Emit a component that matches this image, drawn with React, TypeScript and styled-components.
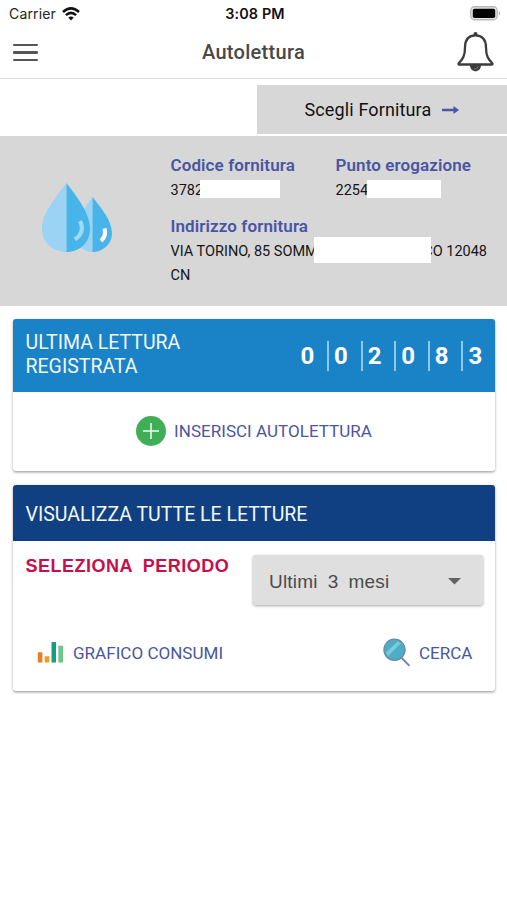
import React from "react";
import styled, { createGlobalStyle } from "styled-components";

const GlobalStyle = createGlobalStyle`
  * { box-sizing: border-box; }
  html, body { margin: 0; background: #fff; }
  body { font-family: Roboto, sans-serif; color: #151515; }
  button { font: inherit; color: inherit; border: 0; padding: 0; background: none; }
`;

const Screen = styled.main`
  width: 507px;
  height: 900px;
  overflow: hidden;
  background: #fff;
`;

const StatusBar = styled.div`
  height: 28px;
  display: grid;
  grid-template-columns: 1fr auto 1fr;
  align-items: center;
  padding: 0 6px 0 9px;
  font: 400 14px/28px Inter, sans-serif;
  color: #222;
`;

const Carrier = styled.span`
  display: flex;
  align-items: center;
  gap: 6px;
  letter-spacing: 0.15px;
`;

const Clock = styled.span`
  font-weight: 600;
  font-size: 14.4px;
  letter-spacing: 0.1px;
  color: #111;
`;

const BatterySlot = styled.span`
  display: flex;
  justify-content: flex-end;
  padding-bottom: 2px;
`;

const AppBar = styled.header`
  height: 51px;
  display: grid;
  grid-template-columns: 1fr auto 1fr;
  align-items: center;
  padding: 0 13px;
  border-bottom: 1px solid #dedede;
`;

const Title = styled.h1`
  margin: 0;
  padding-bottom: 3px;
  font-size: 20px;
  font-weight: 500;
  letter-spacing: 0.3px;
  line-height: 24px;
  color: #484848;
`;

const MenuButton = styled.button`
  display: grid;
  gap: 5px;
  width: 25px;
  padding-bottom: 1px;
`;

const MenuLine = styled.span`
  height: 2.5px;
  background: #555;
  border-radius: 1px;
`;

const BellButton = styled.button`
  justify-self: end;
  display: flex;
  padding-bottom: 3px;
`;

const SupplyRow = styled.div`
  display: flex;
  justify-content: flex-end;
  padding-top: 6px;
  margin-bottom: 2px;
`;

const SupplyButton = styled.button`
  width: 250px;
  height: 49px;
  display: flex;
  align-items: center;
  padding-left: 47.5px;
  gap: 11px;
  background: #d7d7d7;
  font-size: 18px;
  letter-spacing: 0.13px;
  color: #111;
`;

const SupplyPanel = styled.section`
  height: 170px;
  display: flex;
  background: #d7d7d7;
`;

const DropsColumn = styled.div`
  width: 170.5px;
  padding: 46px 0 0 41px;
`;

const Details = styled.div`
  width: 331px;
  padding-top: 17px;
  display: grid;
  grid-template-columns: 165px 1fr;
  grid-template-rows: 61px auto;
`;

const Field = styled.div<{ $wide?: boolean }>`
  grid-column: ${(p) => (p.$wide ? "1 / -1" : "auto")};
`;

const FieldLabel = styled.div`
  font-size: 17px;
  font-weight: 600;
  letter-spacing: 0.1px;
  line-height: 24px;
  color: #4a55a2;
`;

const FieldValue = styled.div`
  position: relative;
  width: max-content;
  margin-top: 2px;
  font-size: 14.5px;
  line-height: 24px;
  color: #151515;
`;

const Mask = styled.span<{ $x: number; $y: number; $w: number; $h: number }>`
  position: absolute;
  left: ${(p) => p.$x}px;
  top: ${(p) => p.$y}px;
  width: ${(p) => p.$w}px;
  height: ${(p) => p.$h}px;
  background: #fff;
`;

const AddressGap = styled.span`
  display: inline-block;
  width: 105.5px;
`;

const Cards = styled.div`
  display: grid;
  gap: 14px;
  padding: 13px 12px 0 13px;
`;

const Card = styled.section`
  border-radius: 3px;
  background: #fff;
  box-shadow: 0 1px 3px rgba(0, 0, 0, 0.3), 0 2px 2px rgba(0, 0, 0, 0.1);
  overflow: hidden;
`;

const CardHeader = styled.div<{ $tone: string; $height: number }>`
  height: ${(p) => p.$height}px;
  display: flex;
  align-items: center;
  justify-content: space-between;
  padding: 0 0 0 12.5px;
  background: ${(p) => p.$tone};
  color: #f1f8ff;
  font-size: 19.5px;
  line-height: 24px;
`;

const HeaderText = styled.span<{ $top?: number; $bottom?: number }>`
  padding-top: ${(p) => p.$top ?? 0}px;
  padding-bottom: ${(p) => p.$bottom ?? 0}px;
`;

const Counter = styled.div`
  display: flex;
`;

const Digit = styled.span`
  width: 33.6px;
  height: 30px;
  padding-left: 5px;
  border-left: 2px solid #8dc9ee;
  font-size: 24px;
  font-weight: 700;
  line-height: 30px;
  color: #fff;
  &:first-child { border-color: transparent; }
`;

const InsertRow = styled.div`
  height: 79px;
  display: flex;
  justify-content: center;
  align-items: center;
  padding-bottom: 2px;
`;

const Action = styled.button<{ $gap: number }>`
  display: flex;
  align-items: center;
  gap: ${(p) => p.$gap}px;
  font-size: 17px;
  letter-spacing: 0.03px;
  line-height: 22px;
  color: #4a55a2;
`;

const PeriodRow = styled.div`
  height: 79px;
  display: flex;
  justify-content: space-between;
  align-items: flex-start;
  padding: 14px 12px 0 12.5px;
`;

const PeriodLabel = styled.label`
  font: 700 18px/22px "Liberation Sans", sans-serif;
  letter-spacing: 0.5px;
  word-spacing: 5px;
  color: #c80d4b;
`;

const Select = styled.button`
  width: 230px;
  height: 50px;
  display: flex;
  align-items: center;
  justify-content: space-between;
  padding: 3px 22px 0 16px;
  border-radius: 3px;
  background: #dfdfdf;
  box-shadow: 0 1px 3px rgba(0, 0, 0, 0.35);
  font: 400 19px/24px "Liberation Sans", sans-serif;
  letter-spacing: 0.2px;
  word-spacing: 4.5px;
  color: #4c4c4c;
`;

const ActionRow = styled.div`
  height: 71px;
  display: flex;
  align-items: center;
  justify-content: space-between;
  padding: 0 22.5px 5px 24px;
`;

const WifiIcon = () => (
  <svg width="18" height="14" viewBox="0 0 18 14" fill="none" stroke="#111" strokeWidth="2.5">
    <path d="M1 5Q9-2.2 17 5M3.9 8.1Q9 3.6 14.1 8.1" />
    <path d="M6.3 10.5Q9 8.3 11.7 10.5L9 13.4Z" fill="#111" stroke="none" />
  </svg>
);

const BatteryIcon = () => (
  <svg width="31" height="15" viewBox="0 0 31 15">
    <rect x=".75" y=".75" width="26.5" height="13" rx="3.8" fill="#e5e5e5" stroke="#b8b8b8" strokeWidth="1.3" />
    <rect x="2.8" y="2.7" width="22.4" height="9.3" rx="1.8" fill="#000" />
    <path d="M28.8 5Q31.5 7.2 28.8 9.5Z" fill="#b0b0b0" />
  </svg>
);

const BellIcon = () => (
  <svg width="37" height="40" viewBox="0 0 37 40" fill="none" stroke="#3c3c3c" strokeWidth="2.3">
    <circle cx="18.5" cy="2.1" r="2" fill="#3c3c3c" stroke="none" />
    <path d="M18.5 3.3C11 3.3 8 8.5 8 15.5C8 24 5.7 27.4 1.9 31C1.2 31.8 1.5 32.5 2.3 32.5H34.7C35.5 32.5 35.8 31.8 35.1 31C31.3 27.4 29 24 29 15.5C29 8.5 26 3.3 18.5 3.3Z" />
    <path d="M13 33C13 41.3 24 41.3 24 33Z" fill="#3c3c3c" stroke="none" />
    <path d="M17 37Q20.5 37.5 21.3 34" stroke="#999" strokeWidth=".6" />
  </svg>
);

const ArrowIcon = () => (
  <svg width="17" height="10" viewBox="0 0 17 10">
    <path d="M0 3.8H11.5V1L17 5L11.5 9V6.2H0Z" fill="#4856a5" />
  </svg>
);

const DropsIcon = () => (
  <svg width="72" height="72" viewBox="0 0 72 72">
    <path d="M51.5 15C44 25 35 38 35 51.5C35 62.5 42 70 51.5 70Z" fill="#9ad3f4" />
    <path d="M51.5 15C61 27 71 39 71 51.5C71 62.5 61 70 51.5 70Z" fill="#47b5e9" />
    <path d="M25.5 1C15 15 1 31 1 46.5C1 60.5 12 70 25.5 70Z" fill="#9ad3f4" />
    <path d="M25.5 1C36 15 49 31 49 46.5C49 60.5 39 70 25.5 70Z" fill="#47b5e9" />
    <path d="M39 39Q44.5 50 34 57.5" fill="none" stroke="#a0daf7" strokeWidth="4" />
    <path d="M63.5 46.5Q65.5 54 60 59" fill="none" stroke="#fff" strokeWidth="4.2" />
  </svg>
);

const PlusIcon = () => (
  <svg width="30" height="30" viewBox="0 0 30 30">
    <circle cx="15" cy="15" r="15" fill="#3fae57" />
    <path d="M7 15H23M15 7V23" stroke="#e9fff0" strokeWidth="1.5" />
  </svg>
);

const ChartIcon = () => (
  <svg width="27" height="24" viewBox="0 0 27 24">
    <path d="M.8 11.2H5.4V21.5H.8Z" fill="#ea7e20" />
    <path d="M7.7 15.3H12.3V21.5H7.7Z" fill="#f29b24" />
    <path d="M14.5 1H19V21.5H14.5Z" fill="#159d86" />
    <path d="M21.3 4.7H26V21.5H21.3Z" fill="#70c58d" />
  </svg>
);

const SearchIcon = () => (
  <svg width="28" height="31" viewBox="0 0 28 31">
    <path d="M18.7 20L26.5 27.8" stroke="#7186a5" strokeWidth="1.8" />
    <circle cx="11.5" cy="11.8" r="10.6" fill="#4eacc4" stroke="#6c8ba7" strokeWidth="1.2" />
    <path d="M3 14.5L14.8 3.2L18 5.2L5.2 18Z" fill="#78cbd7" />
  </svg>
);

const CaretIcon = () => (
  <svg width="13" height="7" viewBox="0 0 13 7">
    <path d="M0 0H13L6.5 6.5Z" fill="#626262" />
  </svg>
);

export default function App() {
  return (
    <Screen>
      <GlobalStyle />
      <StatusBar>
        <Carrier>Carrier <WifiIcon /></Carrier>
        <Clock>3:08 PM</Clock>
        <BatterySlot><BatteryIcon /></BatterySlot>
      </StatusBar>
      <AppBar>
        <MenuButton aria-label="Menu"><MenuLine /><MenuLine /><MenuLine /></MenuButton>
        <Title>Autolettura</Title>
        <BellButton aria-label="Notifiche"><BellIcon /></BellButton>
      </AppBar>
      <SupplyRow>
        <SupplyButton>Scegli Fornitura <ArrowIcon /></SupplyButton>
      </SupplyRow>
      <SupplyPanel>
        <DropsColumn><DropsIcon /></DropsColumn>
        <Details>
          <Field>
            <FieldLabel>Codice fornitura</FieldLabel>
            <FieldValue>3782<Mask $x={29} $y={1} $w={80.5} $h={18} /></FieldValue>
          </Field>
          <Field>
            <FieldLabel>Punto erogazione</FieldLabel>
            <FieldValue>2254<Mask $x={31} $y={1} $w={74.5} $h={18} /></FieldValue>
          </Field>
          <Field $wide>
            <FieldLabel>Indirizzo fornitura</FieldLabel>
            <FieldValue>
              VIA TORINO, 85 SOMM<AddressGap />CO 12048<br />CN
              <Mask $x={143.5} $y={-3} $w={117} $h={26} />
            </FieldValue>
          </Field>
        </Details>
      </SupplyPanel>
      <Cards>
        <Card>
          <CardHeader $tone="#1a82c6" $height={73}>
            <HeaderText $bottom={1}>ULTIMA LETTURA<br />REGISTRATA</HeaderText>
            <Counter>{[..."002083"].map((d, i) => <Digit key={i}>{d}</Digit>)}</Counter>
          </CardHeader>
          <InsertRow>
            <Action $gap={8}><PlusIcon />INSERISCI AUTOLETTURA</Action>
          </InsertRow>
        </Card>
        <Card>
          <CardHeader $tone="#103f82" $height={56}>
            <HeaderText $top={4}>VISUALIZZA TUTTE LE LETTURE</HeaderText>
          </CardHeader>
          <PeriodRow>
            <PeriodLabel>SELEZIONA PERIODO</PeriodLabel>
            <Select>Ultimi 3 mesi <CaretIcon /></Select>
          </PeriodRow>
          <ActionRow>
            <Action $gap={9}><ChartIcon />GRAFICO CONSUMI</Action>
            <Action $gap={8}><SearchIcon />CERCA</Action>
          </ActionRow>
        </Card>
      </Cards>
    </Screen>
  );
}
